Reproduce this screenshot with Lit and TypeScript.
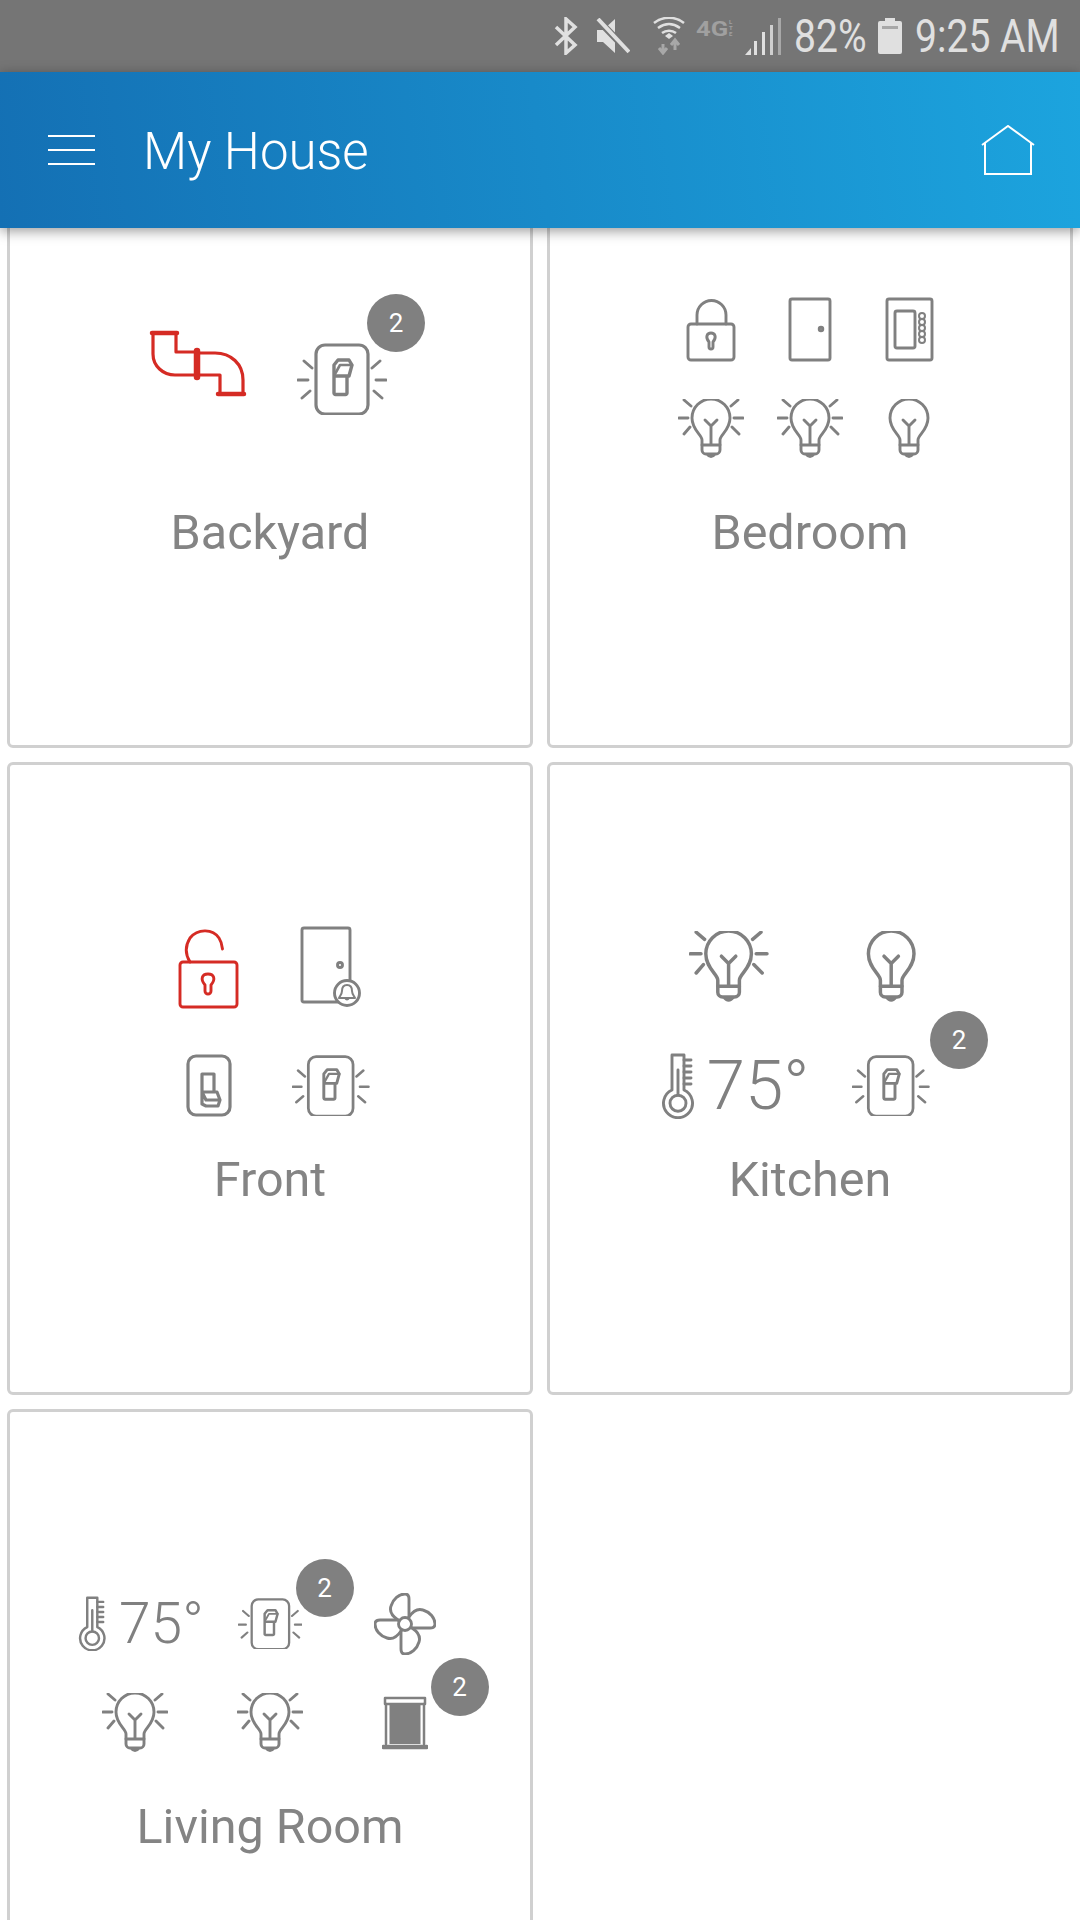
import { LitElement, html, css, svg } from "lit";
import { customElement } from "lit/decorators.js";

const GREY = "#808080";
const RED = "#d52b24";

type IconName =
  | "pipe" | "switchGlow" | "switchPlain" | "lock" | "unlock" | "door" | "doorbell"
  | "panel" | "bulbGlow" | "bulb" | "fan" | "blind" | "thermo";

const rocker = svg`
  <path d="M37 33V22l4-5h11l3 5-3 11H37v17a1.500 1.500 0 0 0 1.500 1.500h10A1.500 1.500 0 0 0 50 50V33" stroke-width="3.400"/>
  <path d="M38 31l5-9h12" stroke-width="2.600"/>`;

const rays = svg`
  <path d="M1 37h10M7 18l8 7M5 55l8-7M79 37h10M83 18l-8 7M85 55l-8-7"/>`;

const bulbBody = svg`
  <path d="M24 46v-5c0-5-10-10-10-22a19 19 0 0 1 38 0c0 12-10 17-10 22v5"/>
  <path d="M24 46h18v5a4 4 0 0 1-4 4H28a4 4 0 0 1-4-4ZM29 55q4 5 8 0M33 45V27l-6-6M33 27l6-6"/>`;

const keyhole = (cx: number, cy: number) => svg`
  <path d="M${cx - 2} ${cy + 2}c-4-5-2-9 2-9s6 4 2 9v5a2 2 0 0 1-4 0Z"/>`;

const ICONS: Record<IconName, { w: number; h: number; vb?: string; body: unknown }> = {
  pipe: {
    w: 98, h: 98,
    body: svg`
      <g stroke=${RED} stroke-width="3.200">
        <path d="M4 3v21c0 12 10 21 22 21h22M27 3v19h21M48 23h18c16 0 28 11 28 27v14M48 45h23v19"/>
        <path d="M3 3h25M69 64h26" stroke-width="4.500"/>
        <path d="M48 21v26" stroke-width="6.500"/>
      </g>`,
  },
  switchGlow: {
    w: 90, h: 72,
    body: svg`${rays}<rect x="19" y="2" width="52" height="69" rx="9" stroke-width="3.200"/>${rocker}`,
  },
  switchPlain: {
    w: 46, h: 63,
    body: svg`
      <rect x="2" y="2" width="42" height="59" rx="8" stroke-width="3.200"/>
      <path d="M16 20h12v18M16 20v30M16 38l4 8h14l-3-8H16M16 50l4 2h12l2-6" stroke-width="3.200"/>`,
  },
  lock: {
    w: 50, h: 64,
    body: svg`
      <rect x="2" y="26" width="46" height="36" rx="3"/>
      <path d="M11 26V17a14.500 14.500 0 0 1 29 0v9"/>
      ${keyhole(25, 42)}`,
  },
  unlock: {
    w: 62, h: 84, vb: "0 -3 62 84",
    body: svg`
      <g stroke=${RED}>
        <rect x="2" y="34" width="57" height="45" rx="3"/>
        <path d="M12 34c-5-8-5-16 0-24 8-10 23-9 29 0 2 3 3 6 3.500 11"/>
        <path d="M27 57c-5-6-3-11 3-11s8 5 3 11v6a3 3 0 0 1-6 0Z"/>
      </g>`,
  },
  door: {
    w: 44, h: 65,
    body: svg`<rect x="2" y="2" width="40" height="61" rx="2"/><circle cx="33" cy="32" r="1.800"/>`,
  },
  doorbell: {
    w: 62, h: 82,
    body: svg`
      <rect x="2" y="2" width="48" height="74" rx="2"/>
      <circle cx="40" cy="39" r="2.500"/>
      <circle cx="47" cy="67" r="12.500" fill="#fff"/>
      <path d="M47 59c-4 0-5 3-5 6 0 3-2 5-3 7h16c-1-2-3-4-3-7 0-3-1-6-5-6ZM45 72q2 3 4 0" stroke-width="2"/>`,
  },
  panel: {
    w: 49, h: 65,
    body: svg`
      <rect x="2" y="2" width="45" height="61" rx="2"/>
      <rect x="10" y="14" width="20" height="37" rx="2"/>
      ${[19, 25, 31, 37, 43].map((y) => svg`<circle cx="37" cy=${y} r="3" stroke-width="2"/>`)}`,
  },
  bulbGlow: {
    w: 66, h: 60,
    body: svg`${bulbBody}<path d="M1 19h9M6 1l7 6M6 35l6-7M56 19h9M60 1l-7 6M61 35l-7-7"/>`,
  },
  bulb: { w: 42, h: 60, vb: "12 0 42 60", body: bulbBody },
  fan: {
    w: 62, h: 62,
    body: svg`
      ${[0, 90, 180, 270].map(
        (a) => svg`<path transform="rotate(${a} 31 31)" d="M24 27C18 23 15 19 17 13 19 6 25 1 31 1c3 0 4 2 4 5v18"/>`
      )}
      <circle cx="31" cy="31" r="6.500" fill="#fff"/>`,
  },
  blind: {
    w: 46, h: 54,
    body: svg`
      <path d="M3 2h40v6H3Z" stroke-width="2.500"/>
      <path d="M4 8v40M42 8v40M1 50h44v2H1Z" stroke-width="2.500"/>
      <rect x="7.500" y="9" width="31" height="39" fill=${GREY} stroke="none"/>`,
  },
  thermo: {
    w: 34, h: 66,
    body: svg`
      <path d="M11 37V2h12v35a14.500 14.500 0 1 1-12 0Z"/>
      <circle cx="17" cy="50.200" r="8"/>
      <path d="M17 42V17M23 7h7M23 13h7M23 19h7M23 25h7M23 31h7"/>`,
  },
};

function icon(name: IconName, scale = 1) {
  const i = ICONS[name];
  return html`<svg
    class="icon"
    width=${i.w * scale}
    height=${i.h * scale}
    viewBox=${i.vb ?? `0 0 ${i.w} ${i.h}`}
  >${i.body}</svg>`;
}

interface Tile {
  name?: IconName;
  temp?: boolean;
  scale?: number;
  badge?: [number, number]; // top, right offsets of the count badge inside the tile
}

interface Room {
  label: string;
  cols: number;
  colW: number;
  rowH: number;
  tiles: Tile[];
}

const ROOMS: Room[] = [
  {
    label: "Backyard", cols: 2, colW: 144, rowH: 118,
    tiles: [{ name: "pipe" }, { name: "switchGlow", badge: [-26, -11] }],
  },
  {
    label: "Bedroom", cols: 3, colW: 99, rowH: 99,
    tiles: [{ name: "lock" }, { name: "door" }, { name: "panel" }, { name: "bulbGlow" }, { name: "bulbGlow" }, { name: "bulb" }],
  },
  {
    label: "Front", cols: 2, colW: 122, rowH: 119,
    tiles: [{ name: "unlock" }, { name: "doorbell" }, { name: "switchPlain" }, { name: "switchGlow", scale: 0.86 }],
  },
  {
    label: "Kitchen", cols: 2, colW: 162, rowH: 119,
    tiles: [
      { name: "bulbGlow", scale: 1.2 },
      { name: "bulb", scale: 1.2 },
      { temp: true, scale: 1 },
      { name: "switchGlow", scale: 0.86, badge: [-15, -16] },
    ],
  },
  {
    label: "Living Room", cols: 3, colW: 135, rowH: 99,
    tiles: [
      { temp: true, scale: 0.84 },
      { name: "switchGlow", scale: 0.72, badge: [-15, -16] },
      { name: "fan" },
      { name: "bulbGlow" },
      { name: "bulbGlow" },
      { name: "blind", badge: [-15, -16] },
    ],
  },
];

@customElement("app-root")
export class AppRoot extends LitElement {
  static override styles = css`
    :host {
      display: block;
      width: 1080px;
      height: 1920px;
      overflow: hidden;
      background: #fff;
      font-family: Roboto, "Noto Sans", sans-serif;
    }

    .status {
      height: 72px;
      background: #757575;
      display: flex;
      align-items: center;
      justify-content: flex-end;
      padding-right: 21px;
      color: #e0e0e0;
      box-sizing: border-box;
    }

    .status svg {
      display: block;
      flex: none;
    }

    .st-text {
      display: inline-block;
      font-size: 46px;
      font-weight: 400;
      line-height: 74px;
      white-space: nowrap;
      transform: scaleX(0.85);
      transform-origin: left center;
    }

    .pct {
      width: 72px;
      margin-left: 13px;
    }

    .time {
      width: 144px;
      margin-left: 13px;
    }

    .lte {
      display: flex;
      align-items: flex-start;
      flex: none;
      width: 41px;
      height: 20px;
      margin: 0 8px 14px 11px;
      color: #a0a0a0;
      font-size: 20px;
      font-weight: 700;
      line-height: 20px;
    }

    .lte span {
      display: inline-block;
      width: 31px;
      transform: scaleX(1.28);
      transform-origin: left center;
    }

    .lte small {
      width: 6px;
      margin-left: 2px;
      font-size: 6px;
      line-height: 6px;
      word-break: break-all;
    }

    .appbar {
      position: relative;
      z-index: 2;
      height: 156px;
      display: flex;
      align-items: center;
      background: linear-gradient(83deg, #1470b4, #1ca4de);
      box-shadow: 0 3px 12px rgba(0, 0, 0, 0.4);
      color: #fff;
    }

    .menu {
      width: 47px;
      height: 30px;
      margin-left: 48px;
      display: flex;
      flex-direction: column;
      justify-content: space-between;
    }

    .menu span {
      height: 2px;
      background: #fff;
    }

    .title {
      margin: 3px 0 0 48px;
      font-size: 51px;
      font-weight: 300;
      flex: 1;
    }

    .home {
      margin-right: 45px;
      display: block;
    }

    .grid {
      display: grid;
      grid-template-columns: 526px 526px;
      gap: 14px;
      padding: 0 7px;
      margin-top: -113px;
    }

    .card {
      height: 633px;
      box-sizing: border-box;
      border: 3px solid #d0d0d0;
      border-radius: 6px;
      text-align: center;
    }

    .icons {
      height: 240px;
      margin-top: 141px;
      display: flex;
      align-items: center;
      justify-content: center;
    }

    .tiles {
      display: grid;
    }

    .tile {
      position: relative;
      display: flex;
      align-items: center;
      justify-content: center;
    }

    .icon {
      display: block;
      flex: none;
      fill: none;
      stroke: #808080;
      stroke-width: 2.9;
      stroke-linecap: round;
      stroke-linejoin: round;
    }

    .temp {
      display: flex;
      align-items: center;
      margin-left: 12px;
      color: #808080;
      font-size: 69px;
      font-weight: 300;
      line-height: 70px;
    }

    .temp span {
      margin-left: 12px;
    }

    .temp.small {
      font-size: 57px;
      line-height: 58px;
    }

    .badge {
      position: absolute;
      width: 58px;
      height: 58px;
      border-radius: 50%;
      background: #808080;
      color: #fff;
      font-size: 26px;
      line-height: 58px;
      text-align: center;
    }

    .label {
      margin-top: 9px;
      font-size: 48.5px;
      line-height: 50px;
      color: #848484;
    }
  `;

  private renderTile(t: Tile) {
    const inner = t.temp
      ? html`<div class="temp ${(t.scale ?? 1) < 1 ? "small" : ""}">
          ${icon("thermo", t.scale ?? 1)}<span>75°</span>
        </div>`
      : icon(t.name as IconName, t.scale ?? 1);
    return html`<div class="tile">
      ${inner}
      ${t.badge
        ? html`<div class="badge" style="top: ${t.badge[0]}px; right: ${t.badge[1]}px">2</div>`
        : null}
    </div>`;
  }

  private renderRoom(r: Room) {
    const tracks = `grid-template-columns: repeat(${r.cols}, ${r.colW}px); grid-auto-rows: ${r.rowH}px`;
    return html`<section class="card">
      <div class="icons">
        <div class="tiles" style=${tracks}>${r.tiles.map((t) => this.renderTile(t))}</div>
      </div>
      <div class="label">${r.label}</div>
    </section>`;
  }

  override render() {
    return html`
      <div class="status">
        <svg width="24" height="38" viewBox="0 0 24 38" fill="none" stroke="currentColor" stroke-width="3.500">
          <path d="M2 10l19 18-9 8V2l9 8L2 28"/>
        </svg>
        <svg style="margin-left:18px" width="34" height="36" viewBox="0 0 34 36">
          <path d="M1 12h6L19 1v34L7 24H1Z" fill="currentColor"/>
          <path d="M2 2l31 32" stroke="#757575" stroke-width="7"/>
          <path d="M2 1l31 33" stroke="currentColor" stroke-width="4"/>
        </svg>
        <svg style="margin-left:23px" width="32" height="38" viewBox="0 0 32 38" fill="none">
          <path d="M1 6c9-7 21-7 30 0M5 11c7-5 15-5 22 0M9 16c4-3 10-3 14 0" stroke="currentColor" stroke-width="2.500"/>
          <path d="M12 19l4-3 4 3-4 3Z" fill="currentColor"/>
          <path d="M10 36V27M6 31l4 5 4-5M22 33V24M18 28l4-5 4 5" stroke="#a8a8a8" stroke-width="3"/>
        </svg>
        <div class="lte"><span>4G</span><small>LTE</small></div>
        <svg width="36" height="38" viewBox="0 0 36 38">
          <path d="M0 38l6-7v7Z" fill="currentColor"/>
          <rect x="9" y="24" width="3" height="14" fill="currentColor"/>
          <rect x="17" y="15" width="3" height="23" fill="currentColor"/>
          <rect x="25" y="8" width="3" height="30" fill="#cfcfcf"/>
          <rect x="33" y="1" width="3" height="37" fill="#a8a8a8"/>
        </svg>
        <span class="st-text pct">82%</span>
        <svg style="margin-left:12px" width="24" height="36" viewBox="0 0 24 36">
          <path d="M7 0h10v3h5a2 2 0 0 1 2 2v29a2 2 0 0 1-2 2H2a2 2 0 0 1-2-2V5a2 2 0 0 1 2-2h5Z" fill="currentColor"/>
          <rect x="4" y="8" width="16" height="3" fill="#a8a8a8"/>
        </svg>
        <span class="st-text time">9:25 AM</span>
      </div>
      <header class="appbar">
        <div class="menu"><span></span><span></span><span></span></div>
        <div class="title">My House</div>
        <svg class="home" width="54" height="50" viewBox="0 0 54 50" fill="none" stroke="#fff" stroke-width="2">
          <path d="M1 20L27 1l26 19M4 18v31h46V18"/>
        </svg>
      </header>
      <main class="grid">${ROOMS.map((r) => this.renderRoom(r))}</main>
    `;
  }
}
